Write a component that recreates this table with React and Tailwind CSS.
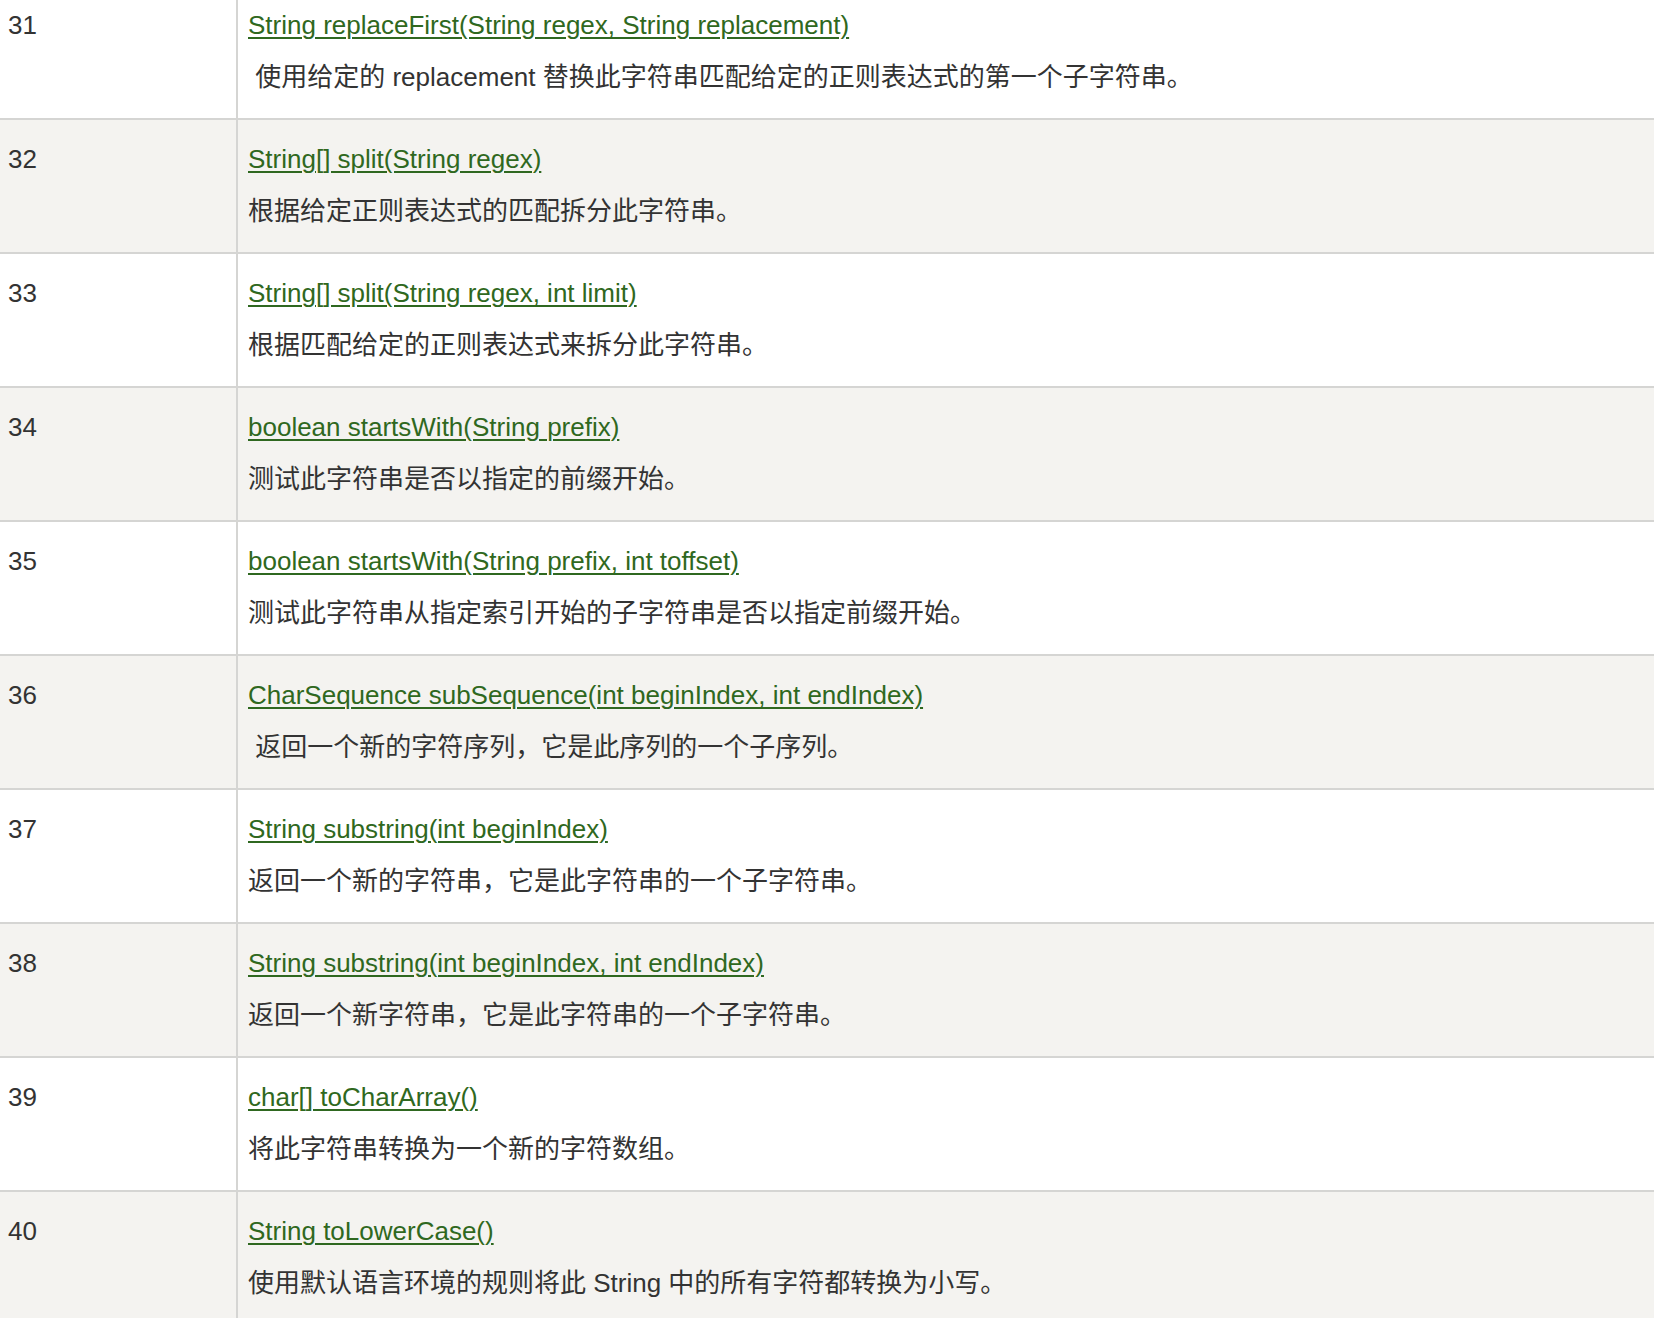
import React from "react";

const rows = [
  ["31", "String replaceFirst(String regex, String replacement)", " 使用给定的 replacement 替换此字符串匹配给定的正则表达式的第一个子字符串。"],
  ["32", "String[] split(String regex)", "根据给定正则表达式的匹配拆分此字符串。"],
  ["33", "String[] split(String regex, int limit)", "根据匹配给定的正则表达式来拆分此字符串。"],
  ["34", "boolean startsWith(String prefix)", "测试此字符串是否以指定的前缀开始。"],
  ["35", "boolean startsWith(String prefix, int toffset)", "测试此字符串从指定索引开始的子字符串是否以指定前缀开始。"],
  ["36", "CharSequence subSequence(int beginIndex, int endIndex)", " 返回一个新的字符序列，它是此序列的一个子序列。"],
  ["37", "String substring(int beginIndex)", "返回一个新的字符串，它是此字符串的一个子字符串。"],
  ["38", "String substring(int beginIndex, int endIndex)", "返回一个新字符串，它是此字符串的一个子字符串。"],
  ["39", "char[] toCharArray()", "将此字符串转换为一个新的字符数组。"],
  ["40", "String toLowerCase()", "使用默认语言环境的规则将此 String 中的所有字符都转换为小写。"],
];

export default function App() {
  return (
    <div
      className="h-[1318px] w-[1654px] overflow-hidden bg-white text-[#333333]"
      style={{ fontFamily: '"Liberation Sans", "Noto Sans CJK SC", sans-serif' }}
    >
      <div className="-mt-[14px] flex flex-col">
        {rows.map(([n, link, desc], i) => (
          <div
            key={n}
            className={`flex h-[134px] shrink-0 border-b-2 border-[#d5d5d3] ${i % 2 === 1 ? "bg-[#f4f3f0]" : "bg-white"}`}
          >
            <div className="w-[238px] shrink-0 border-r-2 border-[#d5d5d3] pl-[8px] pt-[19px] text-[26px] leading-[40px]">
              {n}
            </div>
            <div className="flex flex-col pl-[10px] pt-[19px] text-[26px] leading-[40px]">
              <a
                href="#"
                className="self-start text-[#2f6820] underline decoration-[2px] underline-offset-[3px]"
              >
                {link}
              </a>
              <div className="mt-[12px] whitespace-pre">{desc}</div>
            </div>
          </div>
        ))}
      </div>
    </div>
  );
}
